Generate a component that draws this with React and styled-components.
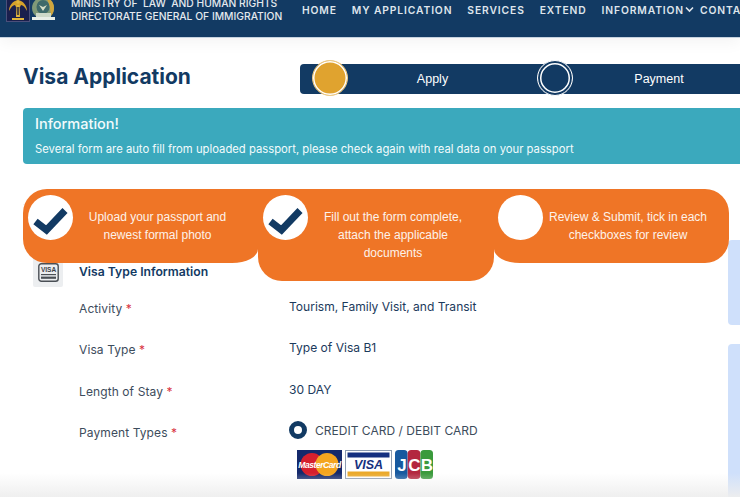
import React from "react";
import styled, { createGlobalStyle } from "styled-components";

const NAVY = "#123a63";
const ORANGE = "#ef7526";

const Global = createGlobalStyle`
  html, body { margin: 0; padding: 0; background: #fff; overflow: hidden; }
  * { box-sizing: border-box; }
`;
const Page = styled.div`
  position: relative; width: 740px; height: 497px; overflow: hidden; background: #fff;
  font-family: Inter, "Liberation Sans", sans-serif; color: ${NAVY};
`;
const Header = styled.header`
  height: 38px; background: ${NAVY}; display: flex; align-items: flex-start; overflow: hidden;
  border-bottom: 1px solid #c5d2df; box-shadow: 0 4px 16px rgba(0,0,0,.05); position: relative; z-index: 1;
  padding-left: 6px; flex-wrap: nowrap; white-space: nowrap;
`;
const Logos = styled.div`display: flex; gap: 1px; margin-top: -6px; flex: none;`;
const Ministry = styled.div`
  margin: -3px 0 0 15px; width: 229px; flex: none; color: #e4e9ee; font-size: 10.3px; font-weight: 500; line-height: 13px;
`;
const Nav = styled.nav`display: flex; align-items: center; margin: 3px 0 0 2px; height: 13px; flex: none;`;
const NavItem = styled.a`
  display: flex; align-items: center; color: #dfe5ec; font-size: 10.3px; font-weight: 600; letter-spacing: .88px;
  margin-right: ${p => p.$gap}px;
`;
const Main = styled.main`padding: 26px 0 0 23px; width: 860px;`;
const TopRow = styled.div`display: flex; align-items: center; height: 30px;`;
const Title = styled.h1`margin: 0; width: 277px; flex: none; font-size: 21px; font-weight: 700; color: ${NAVY}; line-height: 26px; position: relative; top: -2px;`;
const StepBar = styled.div`display: flex; height: 30px; width: 500px; background: ${NAVY}; border-radius: 4px 0 0 4px;`;
const Step = styled.div`display: flex; align-items: center; width: 225px; padding: 0 ${p => p.$right}px 0 12px; flex: none;`;
const Dot = styled.span`
  display: block; flex: none; width: 36px; height: 36px; border-radius: 50%; margin-top: -3px;
  background: ${p => (p.$active ? "#e0a32f" : NAVY)};
  border: ${p => (p.$active ? "1px solid #eccb8a" : "1.5px solid #fff")};
  box-shadow: ${p => (p.$active ? "inset 0 0 0 1.5px #fff" : `inset 0 0 0 2px ${NAVY}, inset 0 0 0 3.5px #fff`)};
`;
const StepLabel = styled.span`
  flex: 1; text-align: center; color: #fff; font-family: "Liberation Sans", Arial, sans-serif; font-size: 12.5px;
`;
const Banner = styled.section`
  margin-top: 14px; height: 56px; width: 740px; background: #3ba9bd; border-radius: 4px; padding: 7px 12px; color: #fff;
`;
const BannerTitle = styled.div`font-size: 14.5px; font-weight: 500; line-height: 18px; color: #f2fbfc;`;
const BannerText = styled.div`font-size: 11.27px; line-height: 16px; margin-top: 8px; color: #f2fbfc;`;
const Body = styled.div`display: flex; margin-top: 40px; align-items: flex-start;`;
const FormCard = styled.section`
  width: 705px; flex: none; padding: 52px 0 0 10px; border-top: 1px solid #f2f3f5; min-height: 293px;
`;
const SectionHead = styled.div`display: flex; gap: 16px; height: 42px; align-items: flex-start;`;
const IconBox = styled.div`
  width: 30px; height: 30px; background: #eceef0; border-radius: 2px; display: flex; align-items: center; justify-content: center; flex: none;
`;
const SectionTitle = styled.h2`margin: 7px 0 0; font-size: 12.2px; font-weight: 600; color: ${NAVY}; line-height: 16px;`;
const Row = styled.div`display: grid; grid-template-columns: 210px 1fr; padding-left: 46px; min-height: 41.4px; align-items: start;`;
const Label = styled.div`font-size: 12px; color: #3d4c5c; line-height: 16px; padding-top: 2px; letter-spacing: .1px;`;
const Star = styled.span`color: #d9333f;`;
const Value = styled.div`font-size: 12.05px; color: #1c3a5c; line-height: 16px;`;
const Radio = styled.div`display: flex; align-items: center; gap: 8px; height: 18px; margin-top: -2px;`;
const RadioDot = styled.span`
  display: block; width: 18px; height: 18px; border-radius: 50%; border: 5.5px solid ${NAVY}; background: #fff; flex: none;
`;
const RadioText = styled.span`font-size: 12px; color: #3d4c5c; letter-spacing: .02px;`;
const Cards = styled.div`display: flex; gap: 3px; margin: 11px 0 0 8px; align-items: center;`;
const SideCol = styled.aside`
  margin-left: 0; display: flex; flex-direction: column; gap: 19px; padding-top: 36px; flex: none;
`;
const SidePanel = styled.div`width: 60px; height: ${p => p.$h}px; background: #cfe0fb; border-radius: 4px;`;
const Tour = styled.div`position: absolute; left: 23px; top: 189px; width: 706px; display: flex; z-index: 3; align-items: flex-start;`;
const TourCard = styled.div`
  width: ${p => p.$w}px; flex: none; height: ${p => p.$h}px; background: ${ORANGE}; border-radius: ${p => p.$radius};
  display: flex; padding: 6px 16px 0 ${p => p.$left}px;
`;
const TourCheck = styled.div`
  width: 45px; height: 45px; border-radius: 50%; background: #fff; flex: none; display: flex;
`;
const TourText = styled.div`
  flex: 1; text-align: center; color: #fdf2ea; font-family: "Liberation Sans", Arial, sans-serif; font-size: 12px; line-height: 18px; padding-top: 12.5px;
`;
const Fade = styled.div`
  position: absolute; left: 0; right: 0; bottom: 0; height: 24px; z-index: 2; pointer-events: none;
  background: linear-gradient(rgba(240,240,240,0), rgba(238,238,238,.95));
`;

const Check = () => (
  <svg width="45" height="45" viewBox="0 0 45 45">
    <path d="M7.5 26.5 L18.5 35 L37 15.5" fill="none" stroke={NAVY} strokeWidth="7" />
  </svg>
);

const LawLogo = () => (
  <svg width="24" height="28" viewBox="0 0 24 28">
    <rect x=".5" y=".5" width="23" height="27" fill="#1a1f4d" stroke="#4a4f7a" />
    <path d="M3 17c0-6 4-10 9-11 5 1 9 5 9 11-2-4-4-6-6-6l-1 2h-4l-1-2c-2 0-4 2-6 6z" fill="#d6a12a" />
    <path d="M10.5 11h3l.5 12h-4z" fill="#e2b53c" />
    <rect x="11.3" y="13" width="1.4" height="8" fill="#15183a" />
    <path d="M6 24h12v2H6z" fill="#e2b53c" />
    <circle cx="12" cy="8" r="1.8" fill="#e2b53c" />
  </svg>
);
const ImmigrationLogo = () => (
  <svg width="25" height="28" viewBox="0 0 25 28">
    <path d="M12 3c6 0 11 5 11 11 0 4-2 7-4 9H6c-3-2-5-5-5-9C1 8 6 3 12 3z" fill="#7f9a78" />
    <path d="M14 3c5 1 9 5 9 11 0 3-1 6-3 8-1-7-1-14-6-19z" fill="#cfa63e" />
    <ellipse cx="12" cy="13" rx="6.5" ry="7" fill="#3e6a6a" />
    <path d="M8 11l4 6 4-6-4 2z" fill="#d7dfc8" />
    <path d="M1 23h23v3H1z" fill="#e8eee6" />
    <path d="M5 19h15v4H5z" fill="#cdd9c8" />
  </svg>
);
const VisaGlyph = () => (
  <svg width="21" height="19" viewBox="0 0 21 19">
    <rect x=".8" y=".8" width="19.4" height="17.4" rx="2.5" fill="none" stroke="#4a4f55" strokeWidth="1.4" />
    <text x="10.5" y="9" textAnchor="middle" fontFamily="Liberation Sans, sans-serif" fontWeight="700" fontSize="6.5" fill="#3c4147">VISA</text>
    <rect x="3" y="11" width="15" height="1.2" fill="#4a4f55" />
    <rect x="3" y="13.6" width="15" height="2.2" fill="#4a4f55" />
  </svg>
);
const MasterCard = () => (
  <svg width="45" height="29" viewBox="0 0 45 29">
    <rect width="45" height="29" fill="#14296b" />
    <circle cx="15" cy="14.5" r="11.5" fill="#d5202e" />
    <circle cx="30" cy="14.5" r="11.5" fill="#f4a51f" />
    <text x="22.5" y="17.6" textAnchor="middle" fontFamily="Liberation Sans, sans-serif" fontStyle="italic" fontWeight="700" fontSize="8.6" letterSpacing="-.5" fill="#fff">MasterCard</text>
  </svg>
);
const VisaCard = () => (
  <svg width="47" height="29" viewBox="0 0 47 29">
    <rect x=".5" y=".5" width="46" height="28" fill="#fff" stroke="#8c9bb0" />
    <rect x="2.5" y="2.5" width="42" height="5" fill="#15307f" />
    <rect x="2.5" y="21.5" width="42" height="5" fill="#eba92a" />
    <text x="23.5" y="19.2" textAnchor="middle" fontFamily="Liberation Sans, sans-serif" fontStyle="italic" fontWeight="700" fontSize="12.5" fill="#15307f">VISA</text>
  </svg>
);
const JcbCard = () => (
  <svg width="38" height="29" viewBox="0 0 38 29">
    <rect x="0" y="0" width="12.6" height="29" rx="3.5" fill="#17599f" />
    <rect x="12.7" y="0" width="12.6" height="29" rx="3.5" fill="#b3273f" />
    <rect x="25.4" y="0" width="12.6" height="29" rx="3.5" fill="#3a9a3c" />
    <text x="7" y="21" textAnchor="middle" fontFamily="Liberation Sans, sans-serif" fontWeight="700" fontSize="17" fill="#fff">J</text>
    <text x="19.5" y="21" textAnchor="middle" fontFamily="Liberation Sans, sans-serif" fontWeight="700" fontSize="17" fill="#fff">C</text>
    <text x="32" y="21" textAnchor="middle" fontFamily="Liberation Sans, sans-serif" fontWeight="700" fontSize="17" fill="#fff">B</text>
  </svg>
);
const Chevron = () => (
  <svg width="9" height="7" viewBox="0 0 9 7" style={{ marginLeft: 1 }}>
    <path d="M1 1.5 L4.5 5 L8 1.5" fill="none" stroke="#dfe5ec" strokeWidth="1.6" />
  </svg>
);

const navItems = [
  ["HOME", 15], ["MY APPLICATION", 15], ["SERVICES", 15], ["EXTEND", 15],
];

export default function App() {
  return (
    <Page>
      <Global />
      <Header>
        <Logos><LawLogo /><ImmigrationLogo /></Logos>
        <Ministry>MINISTRY OF&nbsp; LAW&nbsp; AND HUMAN RIGHTS<br />DIRECTORATE GENERAL OF IMMIGRATION</Ministry>
        <Nav>
          {navItems.map(([t, g]) => <NavItem key={t} $gap={g}>{t}</NavItem>)}
          <NavItem $gap={6}>INFORMATION<Chevron /></NavItem>
          <NavItem $gap={0}>CONTACT</NavItem>
        </Nav>
      </Header>
      <Main>
        <TopRow>
          <Title>Visa Application</Title>
          <StepBar>
            <Step $right={8}><Dot $active /><StepLabel>Apply</StepLabel></Step>
            <Step $right={5}><Dot /><StepLabel>Payment</StepLabel></Step>
          </StepBar>
        </TopRow>
        <Banner>
          <BannerTitle>Information!</BannerTitle>
          <BannerText>Several form are auto fill from uploaded passport, please check again with real data on your passport</BannerText>
        </Banner>
        <Body>
          <FormCard>
            <SectionHead>
              <IconBox><VisaGlyph /></IconBox>
              <SectionTitle>Visa Type Information</SectionTitle>
            </SectionHead>
            <Row><Label>Activity <Star>*</Star></Label><Value>Tourism, Family Visit, and Transit</Value></Row>
            <Row><Label>Visa Type <Star>*</Star></Label><Value>Type of Visa B1</Value></Row>
            <Row><Label>Length of Stay <Star>*</Star></Label><Value>30 DAY</Value></Row>
            <Row>
              <Label>Payment Types <Star>*</Star></Label>
              <div>
                <Radio><RadioDot /><RadioText>CREDIT CARD / DEBIT CARD</RadioText></Radio>
                <Cards><MasterCard /><VisaCard /><JcbCard /></Cards>
              </div>
            </Row>
          </FormCard>
          <SideCol>
            <SidePanel $h={85} />
            <SidePanel $h={200} />
          </SideCol>
        </Body>
      </Main>
      <Tour>
        <TourCard $w={235} $h={74} $left={5} $radius="24px 0 26px 24px / 24px 0 14px 24px">
          <TourCheck><Check /></TourCheck>
          <TourText>Upload your passport and<br />newest formal photo</TourText>
        </TourCard>
        <TourCard $w={236} $h={92} $left={5} $radius="0 0 24px 24px">
          <TourCheck><Check /></TourCheck>
          <TourText>Fill out the form complete,<br />attach the applicable<br />documents</TourText>
        </TourCard>
        <TourCard $w={235} $h={74} $left={4} $radius="0 24px 24px 26px / 0 24px 24px 14px">
          <TourCheck />
          <TourText>Review &amp; Submit, tick in each<br />checkboxes for review</TourText>
        </TourCard>
      </Tour>
      <Fade />
    </Page>
  );
}
